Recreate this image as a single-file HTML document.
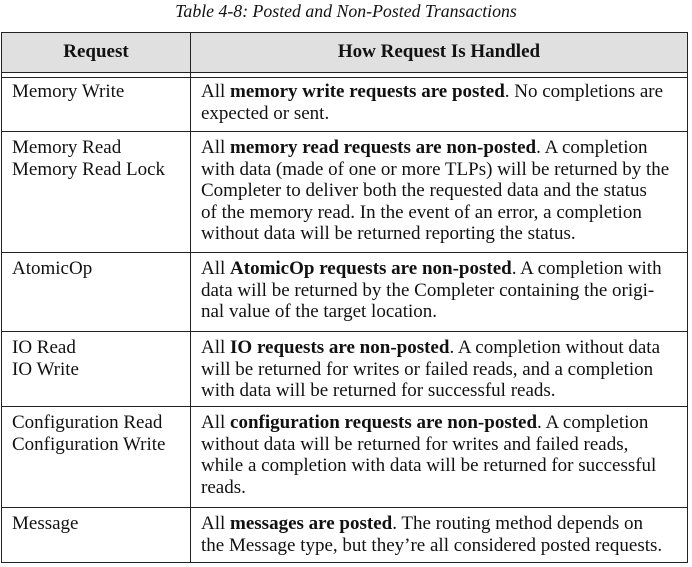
<!DOCTYPE html><html><head><style>
body{margin:0;width:692px;height:567px;background:#fff;font-family:"Liberation Serif",serif;font-size:19px;color:#111;position:relative;overflow:hidden}
.cap{position:absolute;top:0;left:0;width:692px;text-align:center;font-style:italic;line-height:22px;font-size:17.8px}
.r{position:absolute;left:1px;width:687px;border:1.5px solid #222;border-top:none;box-sizing:border-box}
.c1,.c2{position:absolute;top:0;bottom:0;padding:5px 0 0 10px;line-height:21.5px;box-sizing:border-box;white-space:nowrap}
.c1{left:0;width:189px;border-right:1.5px solid #222}
.c2{left:189px;right:0;padding-left:10px}
.h{background:#e0e0e0;font-weight:bold;text-align:center}
.h .c1,.h .c2{padding:8px 0 0;text-align:center}
</style></head><body>
<div class="cap">Table 4-8: Posted and Non-Posted Transactions</div>
<div class="r h" style="top:32px;height:41px;border-top:1.5px solid #222"><div class="c1">Request</div><div class="c2">How Request Is Handled</div></div>
<div class="r" style="top:73px;height:5px;border-bottom:1.5px solid #222"><div class="c1" style="padding:0"></div></div>
<div class="r" style="top:78px;height:54px"><div class="c1" style="padding-top:3px">Memory Write</div><div class="c2" style="padding-top:3px">All <b>memory write requests are posted</b>. No completions are<br>expected or sent.</div></div>
<div class="r" style="top:132px;height:121px"><div class="c1">Memory Read<br>Memory Read Lock</div><div class="c2">All <b>memory read requests are non-posted</b>. A completion<br>with data (made of one or more TLPs) will be returned by the<br>Completer to deliver both the requested data and the status<br>of the memory read. In the event of an error, a completion<br>without data will be returned reporting the status.</div></div>
<div class="r" style="top:253px;height:79px"><div class="c1">AtomicOp</div><div class="c2">All <b>AtomicOp requests are non-posted</b>. A completion with<br>data will be returned by the Completer containing the origi-<br>nal value of the target location.</div></div>
<div class="r" style="top:332px;height:75px"><div class="c1">IO Read<br>IO Write</div><div class="c2">All <b>IO requests are non-posted</b>. A completion without data<br>will be returned for writes or failed reads, and a completion<br>with data will be returned for successful reads.</div></div>
<div class="r" style="top:407px;height:101px"><div class="c1">Configuration Read<br>Configuration Write</div><div class="c2">All <b>configuration requests are non-posted</b>. A completion<br>without data will be returned for writes and failed reads,<br>while a completion with data will be returned for successful<br>reads.</div></div>
<div class="r" style="top:508px;height:55px"><div class="c1">Message</div><div class="c2">All <b>messages are posted</b>. The routing method depends on<br>the Message type, but they’re all considered posted requests.</div></div>
</body></html>
